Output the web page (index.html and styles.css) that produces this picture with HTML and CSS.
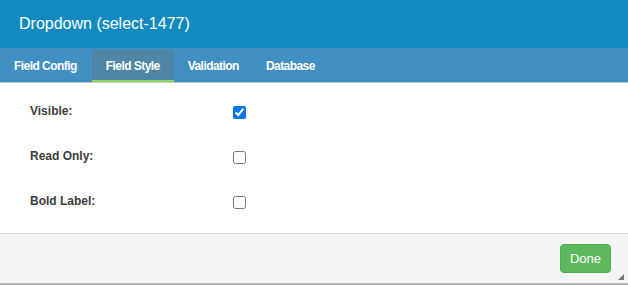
FILE: index.html
```html
<!DOCTYPE html>
<html>
<head>
<meta charset="utf-8">
<link rel="stylesheet" href="styles.css">
</head>
<body>
<div class="dialog">
  <div class="header">Dropdown (select-1477)</div>
  <div class="tabs">
    <div class="tab">Field Config</div>
    <div class="tab active">Field Style</div>
    <div class="tab">Validation</div>
    <div class="tab">Database</div>
  </div>
  <div class="content">
    <div class="row"><span class="label">Visible:</span><input type="checkbox" checked></div>
    <div class="row"><span class="label">Read Only:</span><input type="checkbox"></div>
    <div class="row"><span class="label">Bold Label:</span><input type="checkbox"></div>
  </div>
  <div class="footer">
    <button class="done">Done</button>
    <span class="grip"></span>
  </div>
</div>
</body>
</html>
```
FILE: styles.css
```css
* { box-sizing: border-box; }
html, body { margin: 0; padding: 0; background: #fff; }
body { font-family: "Liberation Sans", Arial, sans-serif; }
.dialog { width: 628px; height: 285px; display: flex; flex-direction: column; }
.header {
  flex: 0 0 48px; background: #128abf; color: #fff;
  font-size: 16px; padding-left: 19px; display: flex; align-items: center;
}
.tabs {
  flex: 0 0 35px; background: #428fc4; display: flex; align-items: flex-end;
  gap: 0; border-bottom: 1px solid #c9c9c9;
}
.tab {
  height: 32px; padding: 0 14px; color: #fff; font-weight: bold; font-size: 12px;
  display: flex; align-items: center; letter-spacing: -0.55px; white-space: nowrap;
}
.tab.active {
  background: #4f86a7; border-radius: 3px 3px 0 0; border-bottom: 2px solid #8fd45c;
  padding-top: 2px; margin-left: 1px;
}
.tab:last-child { padding-left: 13px; }
.content {
  flex: 1 1 auto; min-height: 0; padding: 21px 0 0 30px;
  display: flex; flex-direction: column; gap: 31px;
}
.row { height: 14px; display: flex; align-items: flex-start; }
.label { width: 203px; font-size: 12px; font-weight: bold; color: #3d3d3d; line-height: 14px; }
.row input { margin: 2px 0 0 0; width: 13px; height: 13px; accent-color: #0b74e8; }
.footer {
  flex: 0 0 52px; background: #f4f4f4; border-top: 1px solid #dcdcdc;
  border-bottom: 2px solid #b5b5b5; position: relative;
  display: flex; justify-content: flex-end; align-items: center; padding-right: 17px;
}
.done {
  width: 51px; height: 29px; background: #5cb85c; border: 1px solid #4cae4c; border-radius: 4px;
  color: #fff; font-family: "Liberation Sans", Arial, sans-serif; font-size: 13px; padding: 0;
}
.grip {
  position: absolute; right: 4px; bottom: 3px; width: 0; height: 0;
  border-left: 6px solid transparent; border-bottom: 6px solid #777;
}
```
